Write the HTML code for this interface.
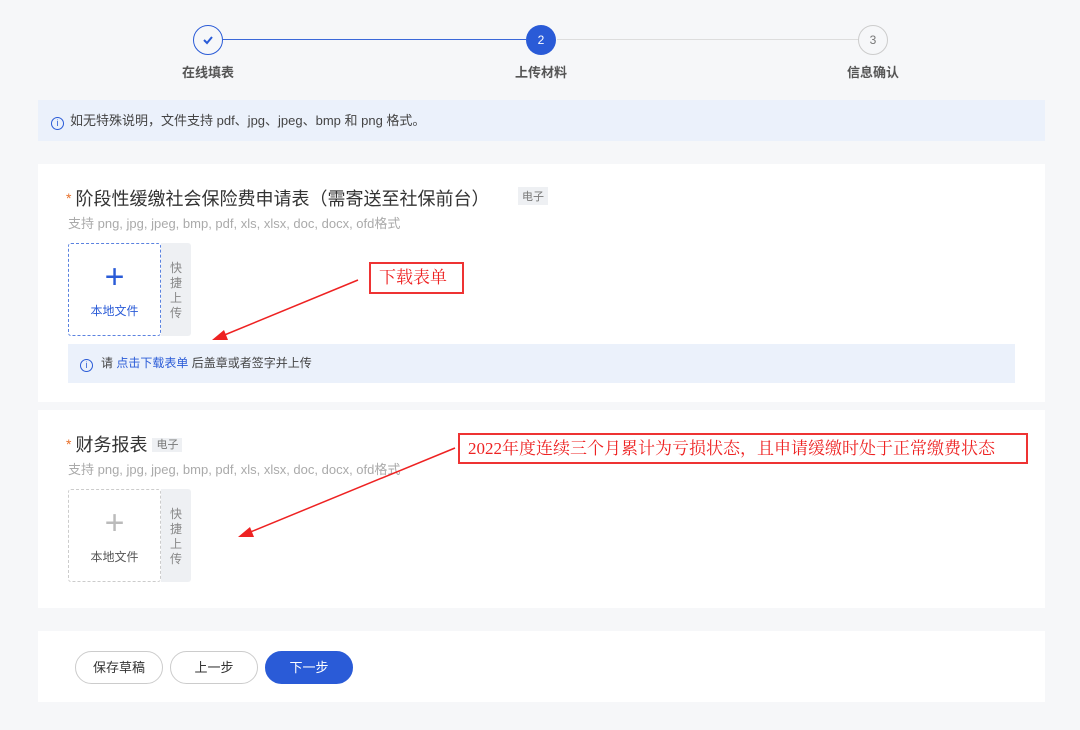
<!DOCTYPE html>
<html><head><meta charset="utf-8"><style>
*{margin:0;padding:0;box-sizing:border-box}
body{width:1080px;height:730px;background:#f6f7f9;font-family:"Liberation Sans","Noto Sans CJK SC",sans-serif;position:relative;overflow:hidden;color:#333}
.a{position:absolute}
.circ{width:30px;height:30px;border-radius:50%;text-align:center;line-height:28px;font-size:12px}
.lbl{font-size:13px;font-weight:bold;color:#555;width:100px;text-align:center}
.card{background:#fff;left:38px;width:1007px}
.up{width:93px;height:93px;border:1px dashed #5a82e0;border-radius:3px;text-align:center;background:#fff}
.side{width:30px;height:93px;background:#eef0f3;border-radius:0 3px 3px 0;font-size:12px;color:#888;text-align:center;line-height:14px;padding-top:18px}
.tag{font-size:11px;color:#777;background:#eef0f3;padding:1px 4px}
.btn{height:33px;width:88px;border-radius:17px;border:1px solid #ccc;font-size:13px;text-align:center;line-height:31px;background:#fff}
.red{border:2px solid #e33;color:#e22;font-family:"Liberation Serif","Noto Serif CJK SC",serif;font-size:17px;background:#fff;padding-left:8px}
.ic{display:inline-block;width:13px;height:13px;border:1.3px solid #2a5bd7;border-radius:50%;color:#2a5bd7;font-size:9px;line-height:11px;text-align:center;vertical-align:-1px;margin-right:6px}
</style></head><body>
<div class="a" style="left:223px;top:39px;width:303px;height:1px;background:#3b68d9"></div>
<div class="a" style="left:557px;top:39px;width:301px;height:1px;background:#ddd"></div>
<div class="a circ" style="left:193px;top:25px;border:1.5px solid #2a5bd7;color:#2a5bd7"><svg width="14" height="14" viewBox="0 0 14 14" style="margin-top:7px"><path d="M3 7l3 3 5-6" stroke="#2a5bd7" stroke-width="2" fill="none"/></svg></div>
<div class="a circ" style="left:526px;top:25px;background:#2a5bd7;color:#fff;line-height:30px">2</div>
<div class="a circ" style="left:858px;top:25px;border:1px solid #ccc;color:#777">3</div>
<div class="a lbl" style="left:158px;top:62px">在线填表</div>
<div class="a lbl" style="left:491px;top:62px">上传材料</div>
<div class="a lbl" style="left:823px;top:62px">信息确认</div>
<div class="a" style="left:38px;top:100px;width:1007px;height:41px;background:#ebf1fb;font-size:13px;color:#444;line-height:41px;padding-left:13px"><span class="ic">i</span>如无特殊说明，文件支持 pdf、jpg、jpeg、bmp 和 png 格式。</div>

<div class="a card" style="top:164px;height:238px"></div>
<div class="a" style="left:66px;top:185px;font-size:18px;color:#333"><span style="color:#e8702a;font-size:14px;vertical-align:2px;margin-right:4px">*</span>阶段性缓缴社会保险费申请表（需寄送至社保前台）</div>
<div class="a tag" style="left:518px;top:187px">电子</div>
<div class="a" style="left:68px;top:213px;font-size:13px;color:#aaa">支持 png, jpg, jpeg, bmp, pdf, xls, xlsx, doc, docx, ofd格式</div>
<div class="a up" style="left:68px;top:243px"><div style="color:#2a5bd7;font-size:34px;line-height:34px;margin-top:16px;font-weight:300">+</div><div style="font-size:12px;color:#2a5bd7;margin-top:8px">本地文件</div></div>
<div class="a side" style="left:161px;top:243px;line-height:15px">快<br>捷<br>上<br>传</div>
<div class="a" style="left:68px;top:344px;width:947px;height:39px;background:#ebf1fb;font-size:12px;line-height:39px;padding-left:12px;color:#444"><span class="ic" style="margin-right:8px">i</span>请 <span style="color:#2a5bd7">点击下载表单</span> 后盖章或者签字并上传</div>

<div class="a card" style="top:410px;height:198px"></div>
<div class="a" style="left:66px;top:431px;font-size:18px;color:#333"><span style="color:#e8702a;font-size:14px;vertical-align:2px;margin-right:4px">*</span>财务报表 <span class="tag" style="vertical-align:3px">电子</span></div>
<div class="a" style="left:68px;top:459px;font-size:13px;color:#aaa">支持 png, jpg, jpeg, bmp, pdf, xls, xlsx, doc, docx, ofd格式</div>
<div class="a up" style="left:68px;top:489px;border-color:#ccc"><div style="color:#bbb;font-size:34px;line-height:34px;margin-top:16px;font-weight:300">+</div><div style="font-size:12px;color:#555;margin-top:8px">本地文件</div></div>
<div class="a side" style="left:161px;top:489px;line-height:15px">快<br>捷<br>上<br>传</div>

<div class="a card" style="top:631px;height:71px"></div>
<div class="a btn" style="left:75px;top:651px">保存草稿</div>
<div class="a btn" style="left:170px;top:651px">上一步</div>
<div class="a btn" style="left:265px;top:651px;background:#2a5bd7;border-color:#2a5bd7;color:#fff">下一步</div>

<div class="a red" style="left:369px;top:262px;width:95px;height:32px;line-height:28px">下载表单</div>
<div class="a red" style="left:458px;top:433px;width:570px;height:31px;line-height:27px">2022年度连续三个月累计为亏损状态，且申请缓缴时处于正常缴费状态</div>
<svg class="a" style="left:0;top:0" width="1080" height="730"><g stroke="#e22" stroke-width="1.5" fill="#e22">
<line x1="358" y1="280" x2="222" y2="336"/><polygon points="212,340 224,330 228,340" stroke="none"/>
<line x1="455" y1="448" x2="248" y2="533"/><polygon points="238,537 250,527 254,537" stroke="none"/></g></svg>
</body></html>
